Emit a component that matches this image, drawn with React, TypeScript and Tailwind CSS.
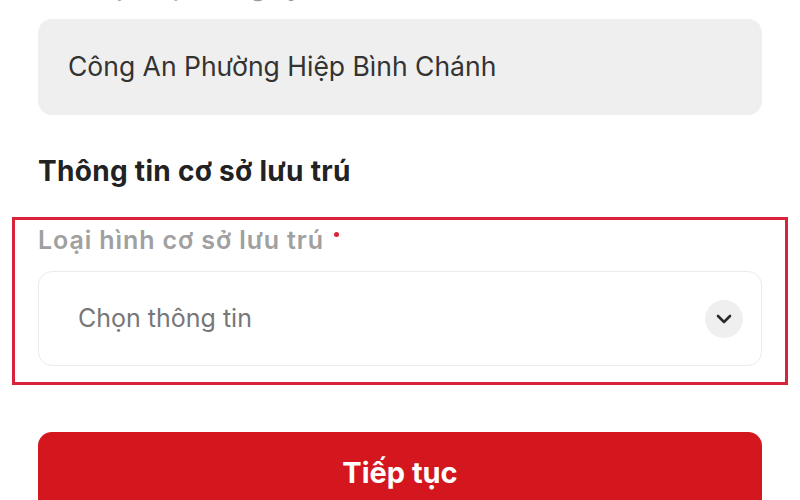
import React from "react";

function ChevronDown() {
  return (
    <svg width="16" height="10" viewBox="0 0 16 10" fill="none">
      <path
        d="M2 2l6 6 6-6"
        stroke="#2b2b2b"
        strokeWidth="2.6"
        strokeLinecap="round"
        strokeLinejoin="round"
      />
    </svg>
  );
}

export default function App() {
  return (
    <div
      className="w-[800px] h-[500px] overflow-hidden bg-white"
      style={{ fontFamily: "Inter, 'Noto Sans', sans-serif" }}
    >
      <div className="px-[38px] -mt-[28px] flex flex-col">
        {/* previous field (cut off at top) */}
        <p className="text-[24px] leading-[32px] font-semibold tracking-[0.6px] text-[#9b9b9b]">
          Nơi tiếp nhận đăng ký
        </p>
        <div className="mt-[15px] h-[96px] rounded-[14px] bg-[#efefef] flex items-center pl-[30px]">
          <span className="text-[26.5px] text-[#333333]">
            Công An Phường Hiệp Bình Chánh
          </span>
        </div>

        <h2 className="mt-[39px] text-[28px] leading-[34px] font-bold tracking-[0.3px] text-[#222222]">
          Thông tin cơ sở lưu trú
        </h2>
      </div>

      {/* highlighted field */}
      <div className="mt-[29px] mx-[12px] h-[168px] border-[3px] border-[#d9233a] px-[23px] pt-[5px]">
        <div className="flex items-start">
          <span className="text-[25px] leading-[30px] font-semibold tracking-[0.9px] text-[#a0a0a0]">
            Loại hình cơ sở lưu trú
          </span>
          <span className="ml-[10px] mt-[7px] w-[5px] h-[5px] rounded-full bg-[#d9233a]" />
        </div>
        <div className="mt-[16px] h-[95px] rounded-[14px] border border-[#ebebeb] flex items-center justify-between pl-[39px] pr-[18px]">
          <span className="text-[25px] text-[#777777]">Chọn thông tin</span>
          <div className="w-[38px] h-[38px] rounded-full bg-[#efefef] flex items-center justify-center">
            <ChevronDown />
          </div>
        </div>
      </div>

      <div className="px-[38px] mt-[47px]">
        <button className="w-full h-[90px] rounded-[14px] bg-[#d4171f] text-white text-[29px] font-bold pb-[8px]">
          Tiếp tục
        </button>
      </div>
    </div>
  );
}
